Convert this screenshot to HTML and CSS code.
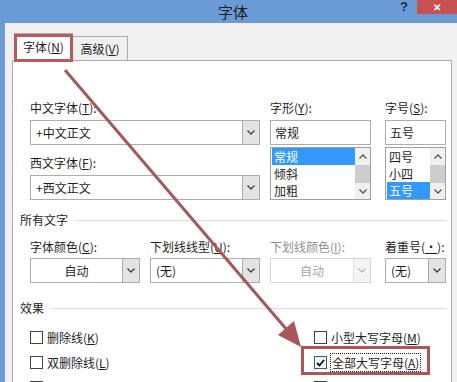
FILE: index.html
```html
<!DOCTYPE html>
<html lang="zh-CN">
<head>
  <meta charset="UTF-8">
  <title>字体</title>
  <link rel="stylesheet" href="styles.css">
</head>
<body>
  <div class="window">
    <div class="titlebar">
      <span class="title">字体</span>
      <span class="help">?</span>
      <span class="close">✕</span>
    </div>
    <div class="frame">
      <div class="tabs">
        <div class="tab active">字体(<u>N</u>)</div>
        <div class="tab">高级(<u>V</u>)</div>
      </div>
      <div class="panel">
        <div class="fonts">
          <div class="col col-main">
            <div class="label">中文字体(<u>T</u>):</div>
            <div class="combo"><span class="value">+中文正文</span><span class="drop"><svg width="8" height="5" viewBox="0 0 8 5"><polyline points="0.5,0.5 4,4 7.5,0.5" fill="none" stroke="#444" stroke-width="1.4"/></svg></span></div>
            <div class="label second">西文字体(<u>F</u>):</div>
            <div class="combo"><span class="value">+西文正文</span><span class="drop"><svg width="8" height="5" viewBox="0 0 8 5"><polyline points="0.5,0.5 4,4 7.5,0.5" fill="none" stroke="#444" stroke-width="1.4"/></svg></span></div>
          </div>
          <div class="col col-style">
            <div class="label">字形(<u>Y</u>):</div>
            <div class="field">常规</div>
            <div class="list">
              <div class="items">
                <div class="item sel">常规</div>
                <div class="item">倾斜</div>
                <div class="item">加粗</div>
              </div>
              <div class="scroll">
                <svg width="8" height="5" viewBox="0 0 8 5"><polyline points="0.5,4.5 4,1 7.5,4.5" fill="none" stroke="#555" stroke-width="1.3"/></svg>
                <div class="thumb"></div>
                <svg width="8" height="5" viewBox="0 0 8 5"><polyline points="0.5,0.5 4,4 7.5,0.5" fill="none" stroke="#555" stroke-width="1.3"/></svg>
              </div>
            </div>
          </div>
          <div class="col col-size">
            <div class="label">字号(<u>S</u>):</div>
            <div class="field">五号</div>
            <div class="list">
              <div class="items">
                <div class="item">四号</div>
                <div class="item">小四</div>
                <div class="item sel">五号</div>
              </div>
              <div class="scroll">
                <svg width="8" height="5" viewBox="0 0 8 5"><polyline points="0.5,4.5 4,1 7.5,4.5" fill="none" stroke="#555" stroke-width="1.3"/></svg>
                <div class="thumb"></div>
                <svg width="8" height="5" viewBox="0 0 8 5"><polyline points="0.5,0.5 4,4 7.5,0.5" fill="none" stroke="#555" stroke-width="1.3"/></svg>
              </div>
            </div>
          </div>
        </div>

        <div class="section first">所有文字</div>
        <div class="attrs">
          <div class="col w110">
            <div class="label">字体颜色(<u>C</u>):</div>
            <div class="combo"><span class="value center">自动</span><span class="drop"><svg width="8" height="5" viewBox="0 0 8 5"><polyline points="0.5,0.5 4,4 7.5,0.5" fill="none" stroke="#444" stroke-width="1.4"/></svg></span></div>
          </div>
          <div class="col w110">
            <div class="label">下划线线型(<u>U</u>):</div>
            <div class="combo"><span class="value">(无)</span><span class="drop"><svg width="8" height="5" viewBox="0 0 8 5"><polyline points="0.5,0.5 4,4 7.5,0.5" fill="none" stroke="#444" stroke-width="1.4"/></svg></span></div>
          </div>
          <div class="col w101">
            <div class="label disabled">下划线颜色(<u>I</u>):</div>
            <div class="combo disabled"><span class="value center">自动</span><span class="drop"><svg width="8" height="5" viewBox="0 0 8 5"><polyline points="0.5,0.5 4,4 7.5,0.5" fill="none" stroke="#bbb" stroke-width="1.4"/></svg></span></div>
          </div>
          <div class="col w61">
            <div class="label">着重号(<u>·</u>):</div>
            <div class="combo"><span class="value">(无)</span><span class="drop"><svg width="8" height="5" viewBox="0 0 8 5"><polyline points="0.5,0.5 4,4 7.5,0.5" fill="none" stroke="#444" stroke-width="1.4"/></svg></span></div>
          </div>
        </div>

        <div class="section second">效果</div>
        <div class="effects">
          <div class="check"><span class="box"></span>删除线(<u>K</u>)</div>
          <div class="check"><span class="box"></span>小型大写字母(<u>M</u>)</div>
          <div class="check"><span class="box"></span>双删除线(<u>L</u>)</div>
          <div class="check marked"><span class="box on"><svg width="9" height="8" viewBox="0 0 9 8"><polyline points="1,4 3.5,6.5 8,1" fill="none" stroke="#111" stroke-width="1.8"/></svg></span><span class="focus">全部大写字母(<u>A</u>)</span></div>
          <div class="check"><span class="box"></span>上标(<u>P</u>)</div>
          <div class="check"><span class="box"></span>隐藏(<u>H</u>)</div>
        </div>
      </div>
    </div>

    <svg class="arrow" width="457" height="382" viewBox="0 0 457 382">
      <line x1="65" y1="70" x2="287" y2="330" stroke="#a8575a" stroke-width="3"/>
      <polygon points="301,347 278,335 294,321" fill="#a8575a"/>
    </svg>
  </div>
</body>
</html>
```

FILE: styles.css
```css
body {
  margin: 0;
  width: 457px;
  height: 382px;
  overflow: hidden;
  font-family: "Noto Sans CJK SC", "Noto Sans", sans-serif;
  font-size: 12px;
  color: #1e1e1e;
}

u {
  text-decoration: underline;
  text-underline-offset: 1px;
}

.window {
  position: relative;
  height: 382px;
  background-color: #f0f0f0;
}

/* title bar */
.titlebar {
  height: 23px;
  background-color: #6b9bd7;
  display: flex;
}

.title {
  margin-left: 218px;
  font-size: 15px;
  line-height: 23px;
  color: #1f1f1f;
}

.help {
  margin-left: auto;
  margin-right: 9px;
  font-family: "Liberation Sans", sans-serif;
  font-weight: bold;
  font-size: 13px;
  line-height: 14px;
  color: #1b2b56;
}

.close {
  width: 40px;
  height: 14px;
  background-color: #c75050;
  color: white;
  font-size: 10px;
  font-weight: bold;
  line-height: 14px;
  text-align: center;
}

/* frame + tabs */
.frame {
  border-left: 5px solid #6b9bd7;
  padding-top: 10px;
  height: 349px;
}

.tabs {
  display: flex;
  align-items: flex-end;
  padding-left: 9px;
  height: 27px;
}

.tab {
  box-sizing: border-box;
  height: 24px;
  width: 56px;
  border: 1px solid #adadad;
  border-bottom: none;
  margin-left: -1px;
  display: flex;
  align-items: center;
  justify-content: center;
  background-color: #f0f0f0;
}

.tab.active {
  position: relative;
  z-index: 1;
  height: 28px;
  width: 59px;
  margin-left: 0;
  margin-bottom: -1px;
  padding-bottom: 3px;
  background-color: white;
}

.tab.active::after {
  content: "";
  position: absolute;
  left: 0;
  top: 0;
  width: 59px;
  height: 28px;
  box-sizing: border-box;
  border: 3px solid #b65a5c;
  margin-left: -1px;
}

.panel {
  margin-left: 7px;
  margin-right: 5px;
  height: 340px;
  background-color: white;
  border: 1px solid #adadad;
  padding: 39px 5px 0 17px;
}

/* common controls */
.label {
  height: 16px;
  line-height: 16px;
  margin-bottom: 4px;
  white-space: nowrap;
}

.label.second {
  margin-top: 10px;
}

.label.disabled {
  color: #8f8f8f;
}

.combo {
  box-sizing: border-box;
  height: 25px;
  border: 1px solid #abadb3;
  display: flex;
  align-items: stretch;
}

.combo .value {
  flex: 1;
  padding-left: 5px;
  line-height: 23px;
}

.combo .value.center {
  text-align: center;
  padding-left: 0;
}

.drop {
  width: 16px;
  border-left: 1px solid #acacac;
  background-color: #e3e3e3;
  display: flex;
  align-items: center;
  justify-content: center;
}

.combo.disabled {
  border-color: #d5d5d5;
  color: #a6a6a6;
}

.combo.disabled .drop {
  background-color: #f4f4f4;
  border-left-color: #e0e0e0;
}

.field {
  box-sizing: border-box;
  height: 25px;
  border: 1px solid #abadb3;
  padding-left: 4px;
  line-height: 23px;
}

.list {
  box-sizing: border-box;
  margin-top: 2px;
  height: 53px;
  border: 1px solid #a0a0a0;
  display: flex;
}

.items {
  flex: 1;
  padding-left: 1px;
}

.item {
  height: 17px;
  line-height: 17px;
  padding-left: 2px;
}

.item.sel {
  background-color: #3399ff;
  color: white;
}

.scroll {
  width: 15px;
  background-color: #f0f0f0;
  display: flex;
  flex-direction: column;
  align-items: center;
  justify-content: space-between;
  padding: 6px 0 5px;
}

.thumb {
  width: 15px;
  height: 18px;
  background-color: #cdcdcd;
}

/* top block */
.fonts {
  display: flex;
}

.col-main {
  width: 230px;
}

.col-style {
  width: 101px;
  margin-left: 10px;
}

.col-size {
  width: 61px;
  margin-left: 14px;
}

.col-size .items {
  padding-left: 1px;
}

/* section headers */
.section {
  margin-left: -10px;
  height: 16px;
  line-height: 16px;
  display: flex;
  align-items: center;
}

.section::after {
  content: "";
  flex: 1;
  height: 1px;
  margin-left: 7px;
  background-color: #dcdcdc;
}

.section.first {
  margin-top: 12px;
}

.section.second {
  margin-top: 17px;
}

/* all text row */
.attrs {
  display: flex;
  margin-top: 11px;
}

.attrs .label {
  margin-bottom: 3px;
}

.w110 {
  width: 110px;
  margin-right: 10px;
}

.w101 {
  width: 101px;
  margin-right: 14px;
}

.w61 {
  width: 61px;
}

/* effects */
.effects {
  display: grid;
  grid-template-columns: 284px 1fr;
  grid-auto-rows: 25px;
  margin-top: 9px;
}

.check {
  display: flex;
  align-items: center;
  white-space: nowrap;
}

.box {
  box-sizing: border-box;
  width: 13px;
  height: 13px;
  border: 1px solid #444;
  background-color: white;
  margin-right: 4px;
  display: flex;
  align-items: center;
  justify-content: center;
}

.box.on {
  background-color: #eef5fc;
  border-color: #2b5c8a;
}

.focus {
  outline: 1px dotted #222;
  padding: 0 1px;
  line-height: 17px;
}

.check.marked {
  position: relative;
}

.check.marked::after {
  content: "";
  position: absolute;
  left: -13px;
  top: -4px;
  width: 129px;
  height: 29px;
  box-sizing: border-box;
  border: 3px solid #b05457;
}

/* annotation arrow */
.arrow {
  position: absolute;
  left: 0;
  top: 0;
  pointer-events: none;
}
```
